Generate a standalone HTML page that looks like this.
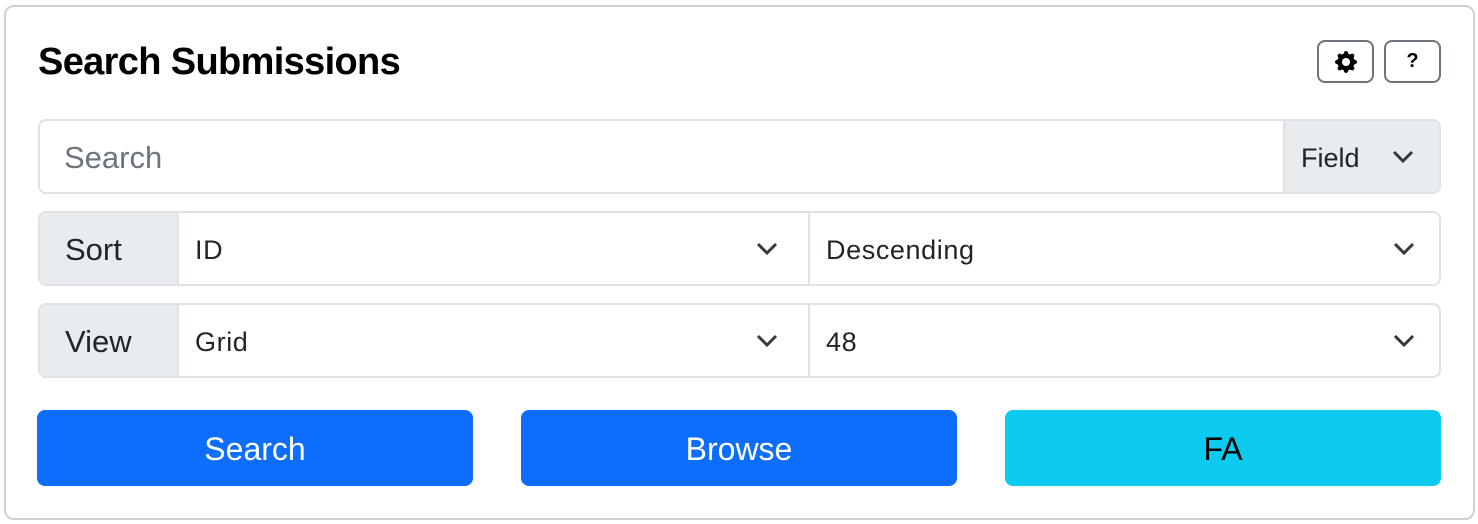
<!DOCTYPE html>
<html><head><meta charset="utf-8"><style>
*{box-sizing:border-box;margin:0;padding:0}
body{width:1478px;height:524px;background:#fff;font-family:"Liberation Sans",sans-serif;color:#212529;position:relative;overflow:hidden}
.a{position:absolute}
.card{left:4px;top:5px;width:1471px;height:515px;border:2px solid #d0d0d0;border-radius:10px}
h1{position:absolute;left:38px;top:38px;font-size:38px;font-weight:bold;color:#000;letter-spacing:-0.65px;line-height:48px}
.ib{border:2px solid #6c757d;border-radius:8px;top:40px;height:43px;width:57px;display:flex;align-items:center;justify-content:center;font-weight:bold;font-size:20px;color:#000}
.box{border:2px solid #dee2e6;border-radius:8px;overflow:hidden;height:75px;left:38px;width:1403px}
.cell{position:absolute;top:0;height:100%;display:flex;align-items:center;padding-top:3px}
.grey{background:#e9ecef}
.lbl{font-size:31px;padding-left:25px}
.sel{font-size:27px;padding-left:16px;letter-spacing:0.6px}
.chev{position:absolute;top:50%;margin-top:-7px}
.btn{top:410px;height:76px;width:436px;border-radius:8px;display:flex;align-items:center;justify-content:center;font-size:32px;color:#fff;padding-top:3px}
</style></head><body>
<div class="a card"></div>
<h1>Search Submissions</h1>
<div class="a ib" style="left:1317px"><svg width="22" height="22" viewBox="0 0 16 16"><path fill="#000" d="M9.405 1.05c-.413-1.4-2.397-1.4-2.81 0l-.1.34a1.464 1.464 0 0 1-2.105.872l-.31-.17c-1.283-.698-2.686.705-1.987 1.987l.169.311c.446.82.023 1.841-.872 2.105l-.34.1c-1.4.413-1.4 2.397 0 2.810l.34.1a1.464 1.464 0 0 1 .872 2.105l-.17.31c-.698 1.283.705 2.686 1.987 1.987l.311-.169a1.464 1.464 0 0 1 2.105.872l.1.34c.413 1.4 2.397 1.4 2.81 0l.1-.34a1.464 1.464 0 0 1 2.105-.872l.31.17c1.283.698 2.686-.705 1.987-1.987l-.169-.311a1.464 1.464 0 0 1 .872-2.105l.34-.1c1.4-.413 1.4-2.397 0-2.81l-.34-.1a1.464 1.464 0 0 1-.872-2.105l.17-.31c.698-1.283-.705-2.686-1.987-1.987l-.311.169a1.464 1.464 0 0 1-2.105-.872l-.1-.34zM8 10.930a2.929 2.929 0 1 1 0-5.860 2.929 2.929 0 0 1 0 5.858z"/></svg></div>
<div class="a ib" style="left:1384px">?</div>

<div class="a box" style="top:119px">
  <div class="cell" style="left:0;width:1243px;font-size:31px;color:#6c757d;padding-left:24px">Search</div>
  <div class="cell grey" style="left:1243px;width:160px;border-left:2px solid #dee2e6;font-size:27px;padding-left:16px">Field
    <svg class="chev" style="right:29px" width="22" height="14" viewBox="0 0 22 14"><path d="M2 2l9 9 9-9" fill="none" stroke="#343a40" stroke-width="3"/></svg></div>
</div>

<div class="a box" style="top:211px">
  <div class="cell grey lbl" style="left:0;width:139px;border-right:2px solid #dee2e6">Sort</div>
  <div class="cell sel" style="left:139px;width:631px;border-right:2px solid #dee2e6">ID
    <svg class="chev" style="right:30px" width="22" height="14" viewBox="0 0 22 14"><path d="M2 2l9 9 9-9" fill="none" stroke="#343a40" stroke-width="3"/></svg></div>
  <div class="cell sel" style="left:770px;width:633px">Descending
    <svg class="chev" style="right:28px" width="22" height="14" viewBox="0 0 22 14"><path d="M2 2l9 9 9-9" fill="none" stroke="#343a40" stroke-width="3"/></svg></div>
</div>

<div class="a box" style="top:303px">
  <div class="cell grey lbl" style="left:0;width:139px;border-right:2px solid #dee2e6">View</div>
  <div class="cell sel" style="left:139px;width:631px;border-right:2px solid #dee2e6">Grid
    <svg class="chev" style="right:30px" width="22" height="14" viewBox="0 0 22 14"><path d="M2 2l9 9 9-9" fill="none" stroke="#343a40" stroke-width="3"/></svg></div>
  <div class="cell sel" style="left:770px;width:633px">48
    <svg class="chev" style="right:28px" width="22" height="14" viewBox="0 0 22 14"><path d="M2 2l9 9 9-9" fill="none" stroke="#343a40" stroke-width="3"/></svg></div>
</div>

<div class="a btn" style="left:37px;background:#0d6efd">Search</div>
<div class="a btn" style="left:521px;background:#0d6efd">Browse</div>
<div class="a btn" style="left:1005px;background:#0dcaf0;color:#000">FA</div>
</body></html>
